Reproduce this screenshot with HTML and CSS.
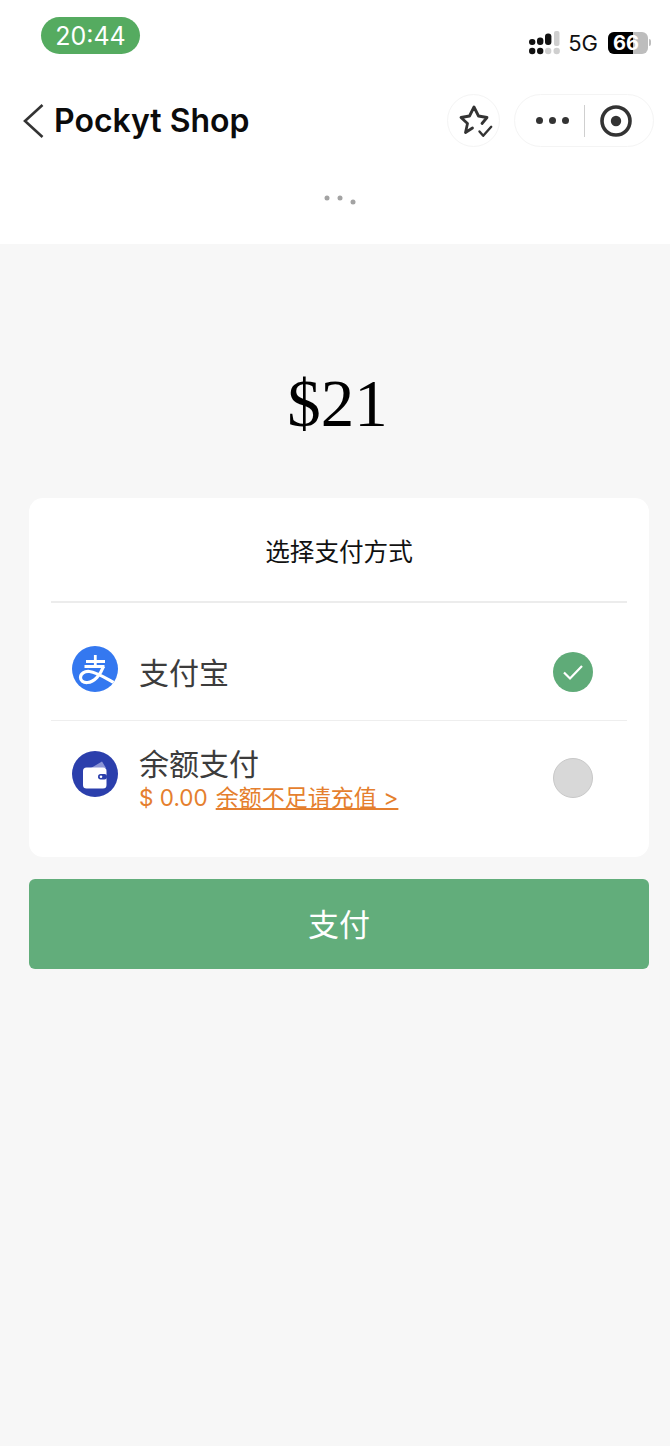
FILE: index.html
```html
<!DOCTYPE html>
<html lang="zh">
<head>
<meta charset="utf-8">
<title>Pockyt Shop</title>
<link rel="stylesheet" href="styles.css">
</head>
<body>
<header class="top">
  <div class="status">
    <span class="time">20:44</span>
    <div class="status-right">
      <svg class="signal" width="32" height="24" viewBox="0 0 32 24">
        <g fill="#111">
          <rect x="0" y="8" width="6.400" height="6" rx="3"/>
          <rect x="8" y="6.500" width="6.400" height="7.500" rx="3"/>
          <rect x="16" y="2.500" width="6.400" height="11.500" rx="3"/>
          <circle cx="3.200" cy="20" r="3.200"/>
          <circle cx="11.200" cy="20" r="3.200"/>
        </g>
        <g fill="#cfcfcf">
          <rect x="25" y="0" width="5.500" height="15" rx="2"/>
          <circle cx="19.200" cy="20" r="3.200"/>
          <circle cx="27.700" cy="20" r="3.200"/>
        </g>
      </svg>
      <span class="net">5G</span>
      <div class="battery">
        <div class="battery-body"><div class="battery-fill"></div><span class="battery-num">66</span></div>
        <i class="battery-nub"></i>
      </div>
    </div>
  </div>
  <nav class="nav">
    <svg class="back" width="22" height="36" viewBox="0 0 22 36"><path d="M20.500 2 3 18l17.500 16" fill="none" stroke="#333" stroke-width="2.600"/></svg>
    <h1 class="title">Pockyt Shop</h1>
    <div class="star-btn">
      <svg width="38" height="38" viewBox="0 0 38 38" fill="none" stroke="#333" stroke-width="2.800" stroke-linejoin="round" stroke-linecap="round">
        <path d="M17.500 26 10.500 30.500 12.500 21.500 6 15.500 14.500 14 19 5 23.500 14 32 15.500 27 21.500"/>
        <path d="M24.500 29.500l3.700 4.300 8-9" stroke-width="2.400"/>
      </svg>
    </div>
    <div class="capsule">
      <div class="more"><i></i><i></i><i></i></div>
      <span class="capsule-sep"></span>
      <svg width="34" height="34" viewBox="0 0 34 34"><circle cx="17" cy="17" r="14" fill="none" stroke="#333" stroke-width="3.600"/><circle cx="17" cy="17" r="5.200" fill="#333"/></svg>
    </div>
  </nav>
  <div class="loader">
    <svg width="36" height="12" viewBox="0 0 36 12"><g fill="#a3a3a3"><circle cx="5" cy="4" r="2.500"/><circle cx="18" cy="4" r="2.500"/><circle cx="31" cy="8" r="2.500"/></g></svg>
  </div>
</header>
<main class="main">
  <div class="amount">$21</div>
  <section class="card">
    <div class="card-title">选择支付方式</div>
    <div class="row row-alipay">
      <svg class="pay-icon icon-alipay" width="46" height="46" viewBox="0 0 46 46">
        <defs><clipPath id="alipay-clip"><circle cx="23" cy="23" r="23"/></clipPath></defs>
        <circle cx="23" cy="23" r="23" fill="#3478f0"/>
        <g clip-path="url(#alipay-clip)" fill="none" stroke="#fff">
          <path d="M14 15.500h19M23.300 9v11M12.500 20.500h20" stroke-width="2.800"/>
          <path d="M31.500 20.500c-3 8-9 15.500-16 16-4.500.3-7-2-7-5 0-4 4-6.500 9-6 8 .8 18 8 27 12.500" stroke-width="3.200"/>
        </g>
      </svg>
      <span class="pay-name name-alipay">支付宝</span>
      <span class="radio radio-on">
        <svg width="22" height="18" viewBox="0 0 22 18"><path d="M2 9.500l6 6L20 3" fill="none" stroke="#fff" stroke-width="2.200"/></svg>
      </span>
    </div>
    <div class="row row-balance">
      <svg class="pay-icon icon-wallet" width="46" height="46" viewBox="0 0 46 46">
        <circle cx="23" cy="23" r="23" fill="#2b3fac"/>
        <path d="M19 17l11-6.500 4 6.500z" fill="#8b95d6"/>
        <rect x="11" y="16.500" width="23.500" height="21" rx="3.500" fill="#fff"/>
        <rect x="26" y="23" width="9" height="5.500" rx="2.700" fill="#2b3fac"/>
        <circle cx="29" cy="25.700" r="1.300" fill="#fff"/>
      </svg>
      <div class="balance-text">
        <span class="pay-name">余额支付</span>
        <div class="balance-sub"><span class="money">$ 0.00</span><a class="recharge">余额不足请充值 &gt;</a></div>
      </div>
      <span class="radio radio-off"></span>
    </div>
  </section>
  <button class="pay-btn">支付</button>
</main>
</body>
</html>
```
FILE: styles.css
```css
* { box-sizing: border-box; }
html, body { margin: 0; padding: 0; }
body {
  width: 670px;
  height: 1446px;
  overflow: hidden;
  background: #f7f7f7;
  font-family: "Inter", "Noto Sans CJK SC", sans-serif;
  color: #333;
}
.top { height: 244px; background: #fff; }
.status {
  height: 94px;
  padding: 17px 19px 0 41px;
  display: flex;
  justify-content: space-between;
  align-items: flex-start;
}
.time {
  width: 99px;
  height: 37px;
  border-radius: 19px;
  background: #55ab60;
  color: #fff;
  font-size: 25px;
  line-height: 38px;
  text-align: center;
}
.status-right { display: flex; align-items: center; margin-top: 13px; }
.signal { display: block; margin-right: 7px; }
.net { font-size: 22px; color: #111; line-height: 24px; margin-right: 10px; margin-top: 1px; }
.battery { display: flex; align-items: center; gap: 1px; }
.battery-body {
  position: relative;
  width: 40px;
  height: 22px;
  margin-top: 1px;
  border-radius: 6px;
  background: #bdbdbd;
  padding-right: 4px;
  text-align: center;
  font-size: 20px;
  font-weight: 700;
  line-height: 22px;
  color: #fff;
}
.battery-fill { position: absolute; left: 0; top: 0; bottom: 0; width: 25px; border-radius: 6px 0 0 6px; background: #000; }
.battery-num { position: relative; }
.battery-nub { width: 2px; height: 7px; border-radius: 0 2px 2px 0; background: #bdbdbd; }
.nav { display: flex; align-items: center; height: 53px; padding-left: 22px; }
.back { display: block; margin-right: 10px; }
.title { margin: 0; font-size: 32px; font-weight: 600; color: #0b0b0b; flex: 1; white-space: nowrap; }
.star-btn {
  width: 53px;
  height: 53px;
  border: 1px solid #f4f4f4;
  border-radius: 50%;
  display: flex;
  align-items: center;
  justify-content: center;
  margin-right: 14px;
}
.star-btn svg { flex: none; display: block; overflow: visible; }
.capsule {
  width: 140px;
  height: 53px;
  margin-right: 16px;
  border: 1px solid #f4f4f4;
  border-radius: 27px;
  display: flex;
  align-items: center;
  padding-left: 21px;
}
.more { display: flex; gap: 6px; width: 37px; }
.more i { width: 7px; height: 7px; border-radius: 50%; background: #333; }
.capsule-sep { width: 1px; height: 32px; background: #cfcfcf; margin-left: 11px; margin-right: 14px; }
.loader { display: flex; justify-content: center; padding: 47px 0 0 10px; }
.loader svg { display: block; }
.main { padding: 0 21px 0 29px; }
.amount {
  height: 254px;
  padding: 120px 3px 0 0;
  text-align: center;
  font-family: "Liberation Serif", serif;
  font-size: 67px;
  line-height: 78px;
  color: #000;
}
.card { background: #fff; border-radius: 14px; height: 359px; padding: 0 22px; }
.card-title {
  height: 105px;
  border-bottom: 2px solid #ececec;
  text-align: center;
  font-size: 24.600px;
  line-height: 108px;
  color: #111;
}
.row { display: flex; align-items: center; padding-left: 21px; padding-right: 34px; }
.row-alipay { height: 118px; padding-top: 12px; border-bottom: 1px solid #eeeeee; }
.row-balance { height: 116px; padding-bottom: 2px; }
.pay-icon { flex: none; display: block; margin-right: 22px; }
.icon-alipay { margin-top: 2px; }
.icon-wallet { margin-top: -8px; }
.pay-name { font-size: 30px; color: #3c3c3c; line-height: 40px; display: block; margin-left: -1px; }
.balance-text { flex: 1; }
.row-alipay .pay-name { flex: 1; padding-top: 10px; }
.balance-sub { display: flex; align-items: center; gap: 8px; color: #e57f2e; font-size: 22.500px; line-height: 28px; margin-left: -1px; }
.recharge { text-decoration: underline; font-size: 23px; }
.radio { flex: none; width: 40px; height: 40px; border-radius: 50%; display: flex; align-items: center; justify-content: center; }
.radio-on { background: #5fab78; margin-top: 9px; }
.radio-off { background: #d8d8d8; border: 1px solid #c8c8c8; }
.pay-btn {
  display: block;
  width: 100%;
  height: 90px;
  margin-top: 22px;
  padding: 0 0 4px;
  border: 0;
  border-radius: 6px;
  background: #62ad7b;
  color: #fff;
  font-family: inherit;
  font-size: 31px;
}
```
